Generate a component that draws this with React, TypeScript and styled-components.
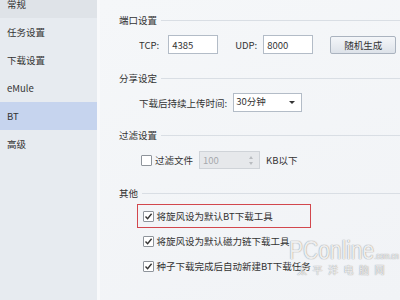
import React from "react";
import styled, { createGlobalStyle } from "styled-components";

const Global = createGlobalStyle`
  html, body { margin: 0; padding: 0; background: #f3f5f8; }
  * { box-sizing: border-box; }
`;

const FONT = `"Noto Sans CJK SC", "Noto Sans", sans-serif`;

const Window = styled.div`
  position: relative;
  width: 400px;
  height: 300px;
  overflow: hidden;
  display: flex;
  font-family: ${FONT};
  font-size: 9.5px;
  color: #333;
`;

const Sidebar = styled.nav`
  width: 97px;
  flex: none;
  background: #e7ebf0;
  display: flex;
  flex-direction: column;
  margin-top: -10px;
`;

const NavItem = styled.div<{ $active?: boolean; $hover?: boolean }>`
  height: 28px;
  flex: none;
  display: flex;
  align-items: center;
  padding-left: 7px;
  background: ${(p) => (p.$active ? "#c6d4ee" : p.$hover ? "#dfe3e8" : "transparent")};
  color: #333;
`;

const Divider = styled.div`
  width: 3px;
  flex: none;
  background: #f8f9fb;
`;

const Main = styled.main`
  flex: 1;
  background: linear-gradient(160deg, #f5f7f9 0%, #f1f3f6 100%);
  padding: 12px 0 0 19px;
  display: flex;
  flex-direction: column;
`;

const Heading = styled.div<{ $mt?: number }>`
  height: 16px;
  margin-top: ${(p) => p.$mt ?? 0}px;
  display: flex;
  align-items: center;
  gap: 4px;
  color: #333;
  &::after {
    content: "";
    flex: 1;
    height: 1px;
    background: #d9dee4;
  }
`;

const Row = styled.div<{ $mt: number; $h: number }>`
  margin-top: ${(p) => p.$mt}px;
  height: ${(p) => p.$h}px;
  padding-left: 20px;
  display: flex;
  align-items: center;
`;

const Label = styled.span<{ $ml?: number }>`
  margin-left: ${(p) => p.$ml ?? 0}px;
  white-space: nowrap;
`;

const TextBox = styled.div<{ $w: number; $ml: number }>`
  width: ${(p) => p.$w}px;
  height: 19px;
  margin-left: ${(p) => p.$ml}px;
  background: #fff;
  border: 1px solid #b3bcc7;
  display: flex;
  align-items: center;
  padding-left: 3px;
  color: #333;
`;

const Button = styled.button`
  width: 66px;
  height: 18px;
  margin-left: 17px;
  border: 1px solid #aab3bf;
  border-radius: 2px;
  background: linear-gradient(#f4f6f9, #dde2e9);
  font-family: ${FONT};
  font-size: 9.5px;
  color: #333;
  padding: 0;
`;

const Select = styled.div`
  width: 69px;
  height: 19px;
  margin-left: 6px;
  background: #fff;
  border: 1px solid #b3bcc7;
  display: flex;
  align-items: flex-start;
  justify-content: space-between;
  padding: 0 6px 0 2px;
  line-height: 14px;
`;

const Arrow = styled.span`
  align-self: center;
  width: 0;
  height: 0;
  border-left: 3px solid transparent;
  border-right: 3px solid transparent;
  border-top: 3.5px solid #333;
`;

const Check = styled.span`
  width: 11px;
  height: 11px;
  flex: none;
  border: 1px solid #8e949b;
  background: #fff;
  border-radius: 1px;
  display: flex;
  align-items: center;
  justify-content: center;
`;

const Spin = styled.div`
  width: 61px;
  height: 18px;
  margin-left: 6px;
  background: #e6e8eb;
  border: 1px solid #cfd3d8;
  display: flex;
  align-items: center;
  justify-content: space-between;
  padding: 0 6px 0 3px;
  color: #a6a9ad;
`;

const SpinArrows = styled.span`
  display: flex;
  flex-direction: column;
  gap: 3px;
`;

const Tri = styled.span<{ $up?: boolean }>`
  width: 0;
  height: 0;
  border-left: 2.5px solid transparent;
  border-right: 2.5px solid transparent;
  ${(p) => (p.$up ? "border-bottom: 3px solid #b9bcc0;" : "border-top: 3px solid #b9bcc0;")}
`;

const OptList = styled.div`
  margin-top: 3px;
  padding-left: 18px;
  display: flex;
  flex-direction: column;
  gap: 1px;
`;

const Opt = styled.div<{ $boxed?: boolean }>`
  width: 174px;
  height: 24px;
  border: 1.5px solid ${(p) => (p.$boxed ? "#d2474d" : "transparent")};
  display: flex;
  align-items: center;
  gap: 3px;
  padding-left: 4.5px;
  white-space: nowrap;
`;

const Watermark = styled.div`
  position: absolute;
  left: 289px;
  top: 243px;
  pointer-events: none;
  display: flex;
  flex-direction: column;
  color: rgba(255, 255, 255, 0.85);
  text-shadow: 0 0 1px rgba(100, 100, 100, 0.55), 0 0 1px rgba(100, 100, 100, 0.45);
  font-family: "Liberation Sans", Arial, sans-serif;
`;

const WmBig = styled.div`
  font-size: 21px;
  line-height: 20px;
  transform: scaleY(1.2);
  transform-origin: left bottom;
  white-space: nowrap;
  span {
    font-size: 7px;
    line-height: 7px;
  }
`;

const WmSmall = styled.div`
  font-family: ${FONT};
  font-size: 10px;
  line-height: 13px;
  letter-spacing: 5.5px;
  padding-left: 8px;
  white-space: nowrap;
`;

const CheckMark = () => (
  <svg width="9" height="9" viewBox="0 0 9 9">
    <path d="M1.5 4.6 L3.6 6.8 L7.6 1.8" fill="none" stroke="#333" strokeWidth="1.4" />
  </svg>
);

export default function App() {
  return (
    <>
      <Global />
      <Window>
        <Sidebar>
          <NavItem $hover>常规</NavItem>
          <NavItem>任务设置</NavItem>
          <NavItem>下载设置</NavItem>
          <NavItem>eMule</NavItem>
          <NavItem $active>BT</NavItem>
          <NavItem>高级</NavItem>
        </Sidebar>
        <Divider />
        <Main>
          <Heading>端口设置</Heading>
          <Row $mt={7} $h={19}>
            <Label>TCP:</Label>
            <TextBox $w={50} $ml={9}>4385</TextBox>
            <Label $ml={17}>UDP:</Label>
            <TextBox $w={50} $ml={6}>8000</TextBox>
            <Button>随机生成</Button>
          </Row>
          <Heading $mt={16}>分享设定</Heading>
          <Row $mt={7} $h={19}>
            <Label>下载后持续上传时间:</Label>
            <Select>
              <span>30分钟</span>
              <Arrow />
            </Select>
          </Row>
          <Heading $mt={15}>过滤设置</Heading>
          <Row $mt={8} $h={18}>
            <Check style={{ marginLeft: 2 }} />
            <Label $ml={3}>过滤文件</Label>
            <Spin>
              <span>100</span>
              <SpinArrows>
                <Tri $up />
                <Tri />
              </SpinArrows>
            </Spin>
            <Label $ml={6}>KB以下</Label>
          </Row>
          <Heading $mt={16}>其他</Heading>
          <OptList>
            <Opt $boxed>
              <Check>
                <CheckMark />
              </Check>
              将旋风设为默认BT下载工具
            </Opt>
            <Opt>
              <Check>
                <CheckMark />
              </Check>
              将旋风设为默认磁力链下载工具
            </Opt>
            <Opt>
              <Check>
                <CheckMark />
              </Check>
              种子下载完成后自动新建BT下载任务
            </Opt>
          </OptList>
        </Main>
        <Watermark>
          <WmBig>
            PConline<span>.com.cn</span>
          </WmBig>
          <WmSmall>太平洋电脑网</WmSmall>
        </Watermark>
      </Window>
    </>
  );
}
